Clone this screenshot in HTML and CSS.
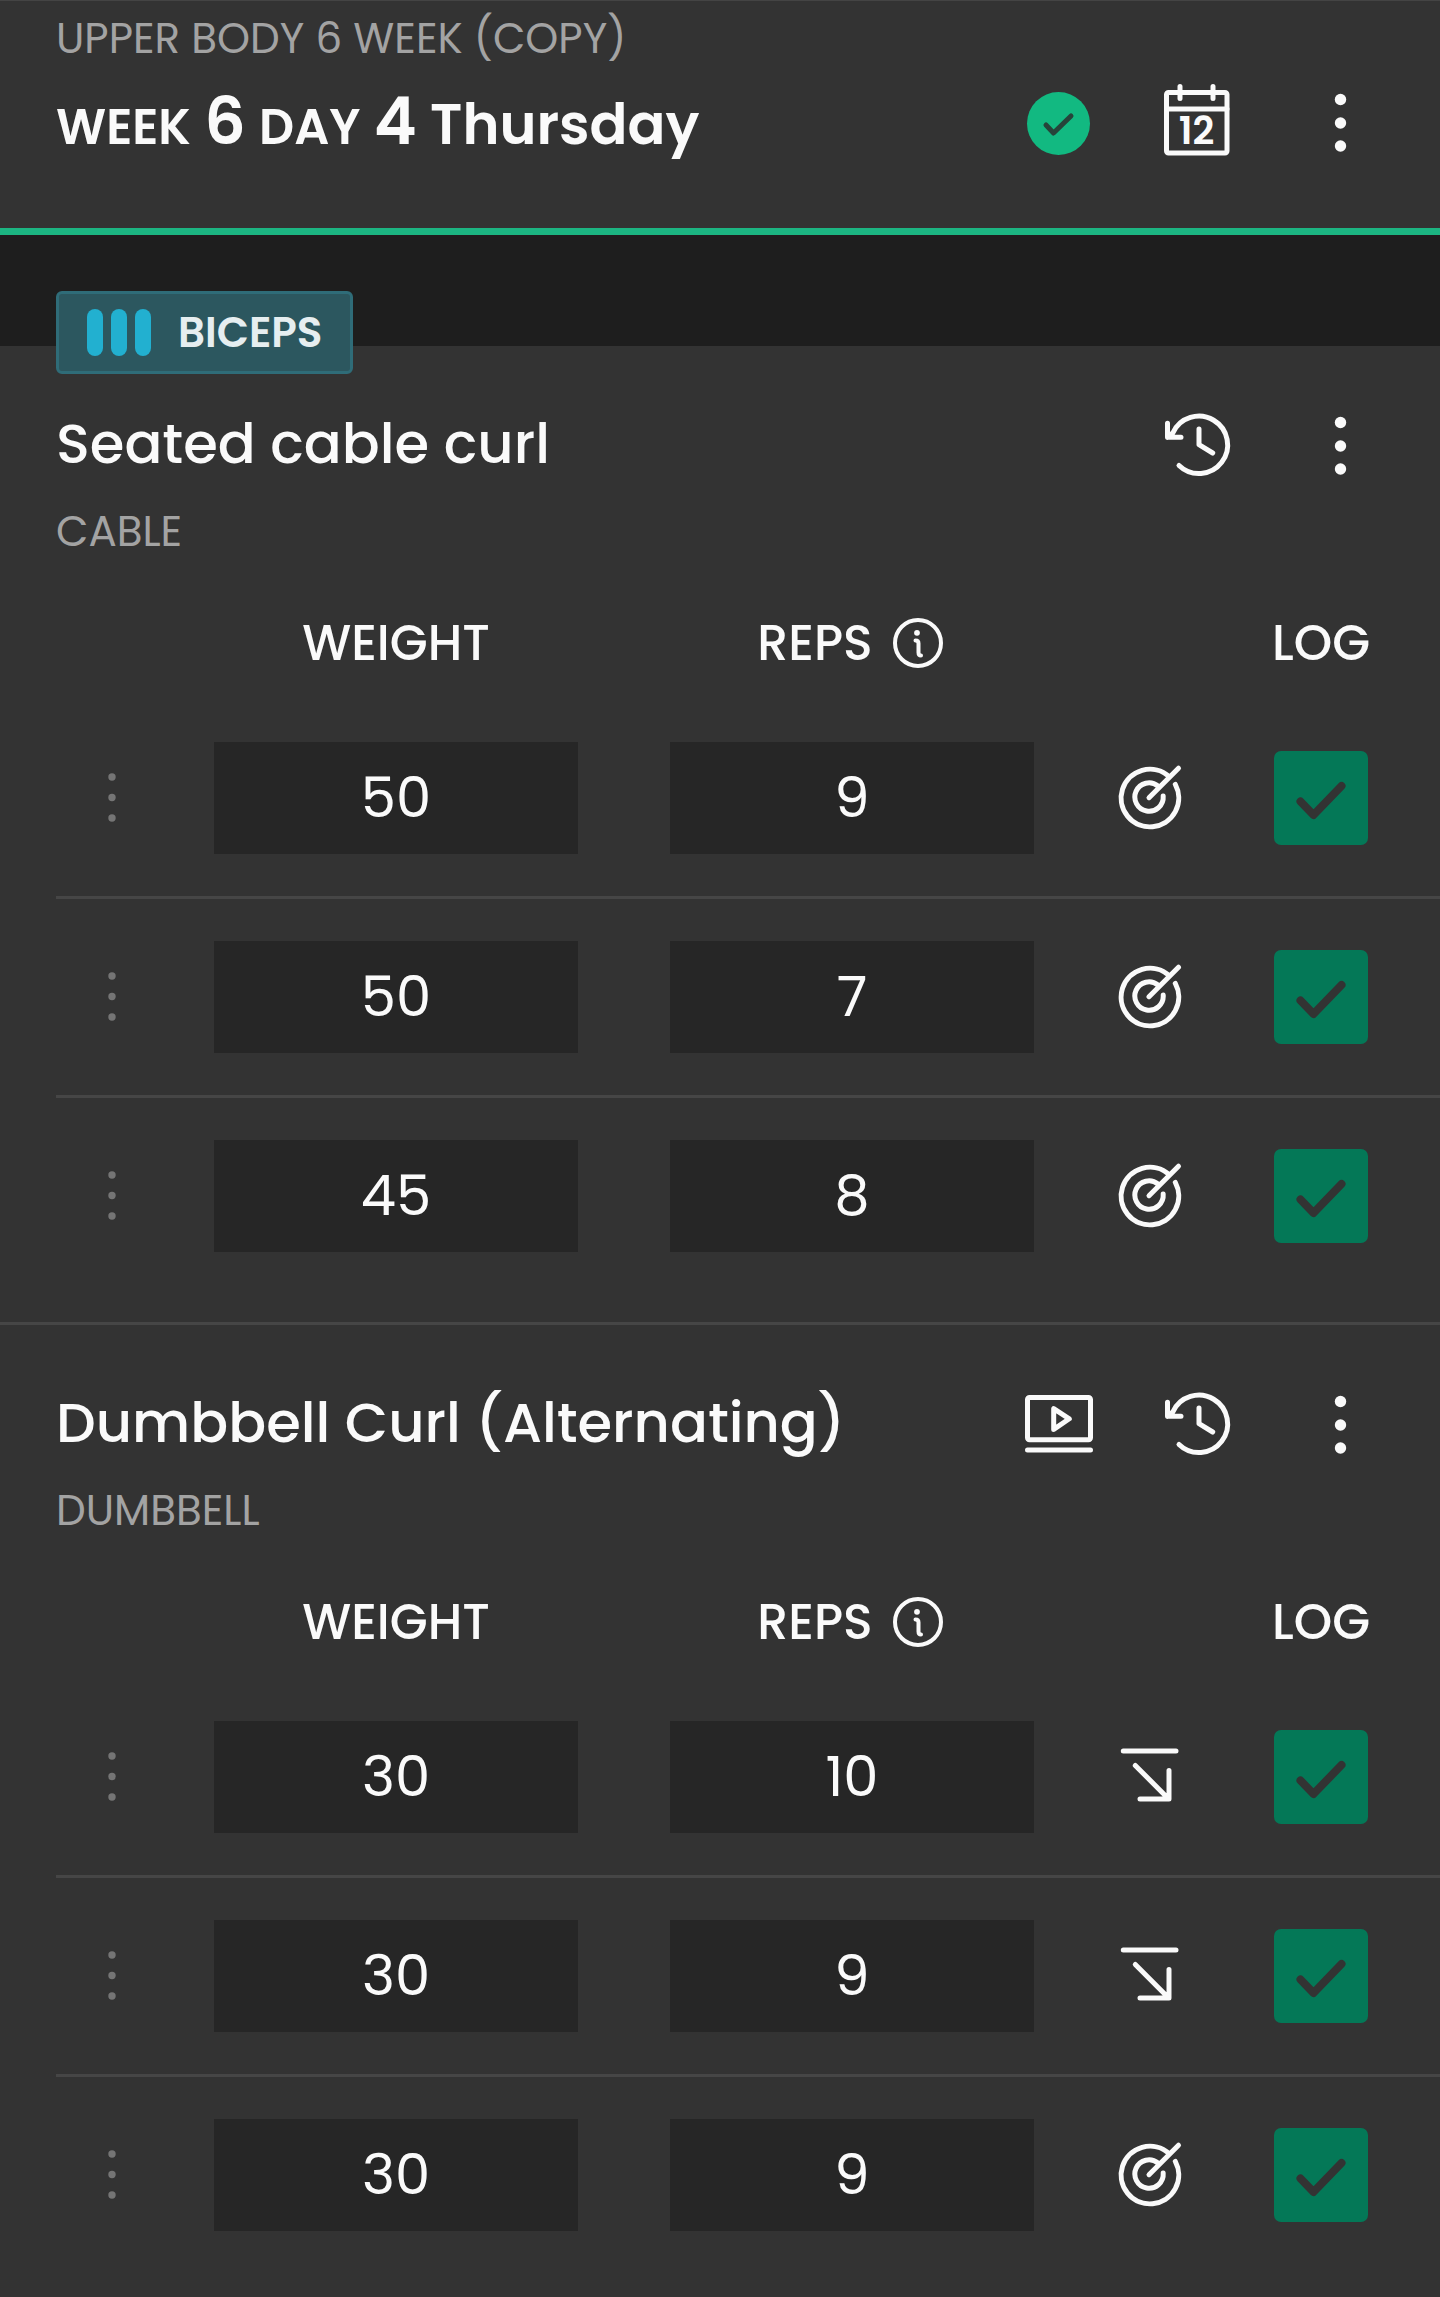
FILE: index.html
```
<!DOCTYPE html>
<html lang="en">
<head>
    <meta charset="UTF-8">
    <meta name="viewport" content="width=device-width, initial-scale=1.0">
    <title>Week 6 Day 4</title>
    <link rel="stylesheet" href="styles.css">
</head>
<body>
    <!-- Shared icons -->
    <svg class="sprite" aria-hidden="true">
        <symbol id="icon-more" viewBox="0 0 80 80">
            <g fill="currentColor"><circle cx="40.5" cy="16.5" r="5.7"/><circle cx="40.5" cy="40" r="5.7"/><circle cx="40.5" cy="63" r="5.7"/></g>
        </symbol>
        <symbol id="icon-history" viewBox="0 0 80 80">
            <path d="M9.5 31.3 14.8 27A28.7 28.7 0 1 1 21 59.5M9.5 17.3v14H23M41 23v15.7L54.7 47"/>
        </symbol>
        <symbol id="icon-video" viewBox="0 0 80 80">
            <rect x="11.5" y="12.5" width="63" height="42.3" rx="2"/>
            <path d="M11.5 65h63M37.7 23.6v20.8l15.6-10.6z"/>
        </symbol>
        <symbol id="icon-grip" viewBox="0 0 72 72">
            <g fill="currentColor"><circle cx="36" cy="15" r="3.7"/><circle cx="36" cy="35.5" r="3.7"/><circle cx="36" cy="56" r="3.7"/></g>
        </symbol>
        <symbol id="icon-target" viewBox="0 0 72 72">
            <path d="M62.3 22.4A28.8 28.8 0 1 1 55.7 14.2M50.2 33.9A14.2 14.2 0 1 1 45 24M36 35.7 65.5 6.2"/>
        </symbol>
        <symbol id="icon-below" viewBox="0 0 72 72">
            <path d="M10.3 10h52.7M22.3 24.5l33.4 33.4M56 29.5V58H27"/>
        </symbol>
        <symbol id="icon-info" viewBox="0 0 50 50">
            <circle cx="25" cy="25" r="23"/>
            <circle cx="24" cy="14.8" r="2.9" fill="currentColor" stroke="none"/>
            <path d="M22.500 22.500q3 0 3 3v9q0 3 2.500 3"/>
        </symbol>
        <symbol id="icon-tick" viewBox="0 0 94 94">
            <path d="M26.5 50.5 39.5 64 67.5 35"/>
        </symbol>
    </svg>

    <header class="day-header">
        <p class="label">UPPER BODY 6 WEEK (COPY)</p>
        <div class="day-row">
            <h1 class="day-title"><span class="word">WEEK</span> <span class="number">6</span> <span class="word">DAY</span> <span class="number">4</span> Thursday</h1>
            <div class="actions">
                <button type="button" class="icon-btn" aria-label="Day completed">
                    <svg viewBox="0 0 80 80"><circle class="done-circle" cx="42.5" cy="40.5" r="31.5"/><path class="done-tick" d="M30 42l7.5 8L55 33"/></svg>
                </button>
                <button type="button" class="icon-btn" aria-label="Calendar">
                    <svg viewBox="0 0 80 80">
                        <rect x="8.5" y="9.5" width="60.5" height="60.5" rx="2"/>
                        <path d="M8.5 26H69M22 3.5v12M55 3.5v12"/>
                        <text class="calendar-day" x="38.5" y="61">12</text>
                    </svg>
                </button>
                <button type="button" class="icon-btn" aria-label="Day options"><svg><use href="#icon-more"/></svg></button>
            </div>
        </div>
    </header>

    <main class="exercises">
        <section class="exercise">
            <div class="muscle-badge">
                <span class="bars"><i></i><i></i><i></i></span>
                BICEPS
            </div>
            <div class="exercise-head">
                <h2>Seated cable curl</h2>
                <div class="actions">
                    <button type="button" class="icon-btn" aria-label="History"><svg><use href="#icon-history"/></svg></button>
                    <button type="button" class="icon-btn" aria-label="Exercise options"><svg><use href="#icon-more"/></svg></button>
                </div>
            </div>
            <p class="label">CABLE</p>
            <table class="sets">
                <thead>
                    <tr>
                        <th class="col-grip"></th>
                        <th>WEIGHT</th>
                        <th><span class="reps-head">REPS <button type="button" class="info-btn" aria-label="About reps"><svg><use href="#icon-info"/></svg></button></span></th>
                        <th class="col-type"></th>
                        <th class="col-log">LOG</th>
                    </tr>
                </thead>
                <tbody>
                    <tr>
                        <td><button type="button" class="set-btn grip" aria-label="Set options"><svg><use href="#icon-grip"/></svg></button></td>
                        <td><input type="text" inputmode="decimal" class="value" aria-label="Weight, set 1" value="50"></td>
                        <td><input type="text" inputmode="numeric" class="value" aria-label="Reps, set 1" value="9"></td>
                        <td><button type="button" class="set-btn" aria-label="On target"><svg><use href="#icon-target"/></svg></button></td>
                        <td class="col-log"><label class="log"><input type="checkbox" aria-label="Log set 1" checked><svg><use href="#icon-tick"/></svg></label></td>
                    </tr>
                    <tr>
                        <td><button type="button" class="set-btn grip" aria-label="Set options"><svg><use href="#icon-grip"/></svg></button></td>
                        <td><input type="text" inputmode="decimal" class="value" aria-label="Weight, set 2" value="50"></td>
                        <td><input type="text" inputmode="numeric" class="value" aria-label="Reps, set 2" value="7"></td>
                        <td><button type="button" class="set-btn" aria-label="On target"><svg><use href="#icon-target"/></svg></button></td>
                        <td class="col-log"><label class="log"><input type="checkbox" aria-label="Log set 2" checked><svg><use href="#icon-tick"/></svg></label></td>
                    </tr>
                    <tr>
                        <td><button type="button" class="set-btn grip" aria-label="Set options"><svg><use href="#icon-grip"/></svg></button></td>
                        <td><input type="text" inputmode="decimal" class="value" aria-label="Weight, set 3" value="45"></td>
                        <td><input type="text" inputmode="numeric" class="value" aria-label="Reps, set 3" value="8"></td>
                        <td><button type="button" class="set-btn" aria-label="On target"><svg><use href="#icon-target"/></svg></button></td>
                        <td class="col-log"><label class="log"><input type="checkbox" aria-label="Log set 3" checked><svg><use href="#icon-tick"/></svg></label></td>
                    </tr>
                </tbody>
            </table>
        </section>

        <section class="exercise">
            <div class="exercise-head">
                <h2>Dumbbell Curl (Alternating)</h2>
                <div class="actions">
                    <button type="button" class="icon-btn" aria-label="Watch video"><svg><use href="#icon-video"/></svg></button>
                    <button type="button" class="icon-btn" aria-label="History"><svg><use href="#icon-history"/></svg></button>
                    <button type="button" class="icon-btn" aria-label="Exercise options"><svg><use href="#icon-more"/></svg></button>
                </div>
            </div>
            <p class="label">DUMBBELL</p>
            <table class="sets">
                <thead>
                    <tr>
                        <th class="col-grip"></th>
                        <th>WEIGHT</th>
                        <th><span class="reps-head">REPS <button type="button" class="info-btn" aria-label="About reps"><svg><use href="#icon-info"/></svg></button></span></th>
                        <th class="col-type"></th>
                        <th class="col-log">LOG</th>
                    </tr>
                </thead>
                <tbody>
                    <tr>
                        <td><button type="button" class="set-btn grip" aria-label="Set options"><svg><use href="#icon-grip"/></svg></button></td>
                        <td><input type="text" inputmode="decimal" class="value" aria-label="Weight, set 1" value="30"></td>
                        <td><input type="text" inputmode="numeric" class="value" aria-label="Reps, set 1" value="10"></td>
                        <td><button type="button" class="set-btn" aria-label="Below target"><svg><use href="#icon-below"/></svg></button></td>
                        <td class="col-log"><label class="log"><input type="checkbox" aria-label="Log set 1" checked><svg><use href="#icon-tick"/></svg></label></td>
                    </tr>
                    <tr>
                        <td><button type="button" class="set-btn grip" aria-label="Set options"><svg><use href="#icon-grip"/></svg></button></td>
                        <td><input type="text" inputmode="decimal" class="value" aria-label="Weight, set 2" value="30"></td>
                        <td><input type="text" inputmode="numeric" class="value" aria-label="Reps, set 2" value="9"></td>
                        <td><button type="button" class="set-btn" aria-label="Below target"><svg><use href="#icon-below"/></svg></button></td>
                        <td class="col-log"><label class="log"><input type="checkbox" aria-label="Log set 2" checked><svg><use href="#icon-tick"/></svg></label></td>
                    </tr>
                    <tr>
                        <td><button type="button" class="set-btn grip" aria-label="Set options"><svg><use href="#icon-grip"/></svg></button></td>
                        <td><input type="text" inputmode="decimal" class="value" aria-label="Weight, set 3" value="30"></td>
                        <td><input type="text" inputmode="numeric" class="value" aria-label="Reps, set 3" value="9"></td>
                        <td><button type="button" class="set-btn" aria-label="On target"><svg><use href="#icon-target"/></svg></button></td>
                        <td class="col-log"><label class="log"><input type="checkbox" aria-label="Log set 3" checked><svg><use href="#icon-tick"/></svg></label></td>
                    </tr>
                </tbody>
            </table>
        </section>
    </main>
</body>
</html>
```
FILE: styles.css
```
* {
    box-sizing: border-box;
}
body {
    font-family: Poppins, Inter, sans-serif;
    background-color: #1e1e1e;
    color: #fafafa;
    margin: 0;
}
h1, h2, p {
    margin: 0;
}
button {
    background: none;
    border: none;
    padding: 0;
    color: inherit;
    font-family: inherit;
    cursor: pointer;
}
svg {
    display: block;
    width: 100%;
    height: 100%;
    fill: none;
    stroke: currentColor;
    stroke-width: 5;
    stroke-linecap: round;
    stroke-linejoin: round;
}
symbol g {
    stroke: none;
}
.sprite {
    display: none;
}
.label {
    font-size: 42px;
    line-height: 60px;
    color: #a3a3a3;
}

/* Day header */
.day-header {
    background-color: #333;
    padding: 8px 60px 65px 56px;
    border-top: 1px solid #444;
    border-bottom: 7px solid #1cb582;
}
.day-row {
    display: flex;
    justify-content: space-between;
    height: 80px;
    margin-top: 14px;
}
.day-title {
    font-size: 56px;
    line-height: 84px;
    font-weight: 600;
}
.day-title .word {
    font-size: 49px;
}
.day-title .number {
    font-size: 65px;
    line-height: 1;
}
.actions {
    display: flex;
    gap: 62px;
}
.icon-btn {
    width: 80px;
    height: 80px;
}
.done-circle {
    fill: #12b981;
    stroke: none;
}
.done-tick {
    stroke: #26443a;
}
.calendar-day {
    font-size: 38px;
    font-weight: 600;
    text-anchor: middle;
    fill: currentColor;
    stroke: none;
}

/* Exercises */
.exercises {
    margin-top: 111px;
}
.exercise {
    position: relative;
    background-color: #333;
    padding: 60px 0 28px 56px;
    border-bottom: 3px solid #464646;
}
.exercise:last-child {
    border-bottom: none;
    padding-bottom: 24px;
}
.muscle-badge {
    position: absolute; /* Straddles the top edge of the section */
    top: -55px;
    left: 56px;
    display: flex;
    align-items: center;
    gap: 27px;
    height: 83px;
    padding: 0 28px;
    border: 3px solid #2f6c78;
    border-radius: 6px;
    background-color: #2c575f;
    color: #e6eef0;
    font-size: 42px;
    font-weight: 600;
}
.bars {
    display: flex;
    gap: 8px;
}
.bars i {
    width: 16px;
    height: 47px;
    border-radius: 8px;
    background-color: #22b0d0;
}
.exercise-head {
    display: flex;
    justify-content: space-between;
    height: 80px;
    padding-right: 60px;
}
.exercise-head h2 {
    font-size: 56px;
    line-height: 76px;
    font-weight: 500;
}
.exercise .label {
    margin: 16px 0 24px;
}

/* Sets table */
.sets {
    width: 100%;
    table-layout: fixed;
    border-spacing: 0;
}
.sets th {
    height: 114px;
    padding: 0;
    font-size: 49px;
    font-weight: 500;
    text-align: center;
}
.sets td {
    padding: 42px 0;
    text-align: center;
    border-bottom: 3px solid #464646;
}
.sets tr:last-child td {
    border-bottom: none;
}
.sets .col-grip {
    width: 112px;
}
.sets .col-type {
    width: 138px;
}
.sets .col-log {
    width: 222px;
    padding-right: 16px;
}
.reps-head {
    display: flex;
    justify-content: center;
    align-items: center;
    gap: 20px;
    padding-right: 4px;
}
.info-btn {
    width: 50px;
    height: 50px;
}
.info-btn svg {
    stroke-width: 4;
}
.value {
    display: block;
    width: 80%;
    height: 112px;
    margin: 0 auto;
    padding: 0 0 2px;
    border: none;
    background-color: #262626;
    color: inherit;
    font-family: inherit;
    font-size: 56px;
    text-align: center;
}
.set-btn {
    display: block;
    width: 72px;
    height: 72px;
    margin: 0 auto;
}
.grip {
    color: #757575;
}
.log {
    display: grid;
    width: 94px;
    height: 94px;
    margin: 0 auto;
}
.log input, .log svg {
    grid-area: 1 / 1;
}
.log input {
    appearance: none;
    width: 94px;
    height: 94px;
    margin: 0;
    border-radius: 7px;
    background-color: #262626;
}
.log input:checked {
    background-color: #047857;
}
.log svg {
    color: #333;
    stroke-width: 8;
    pointer-events: none;
    z-index: 1;
}
```
